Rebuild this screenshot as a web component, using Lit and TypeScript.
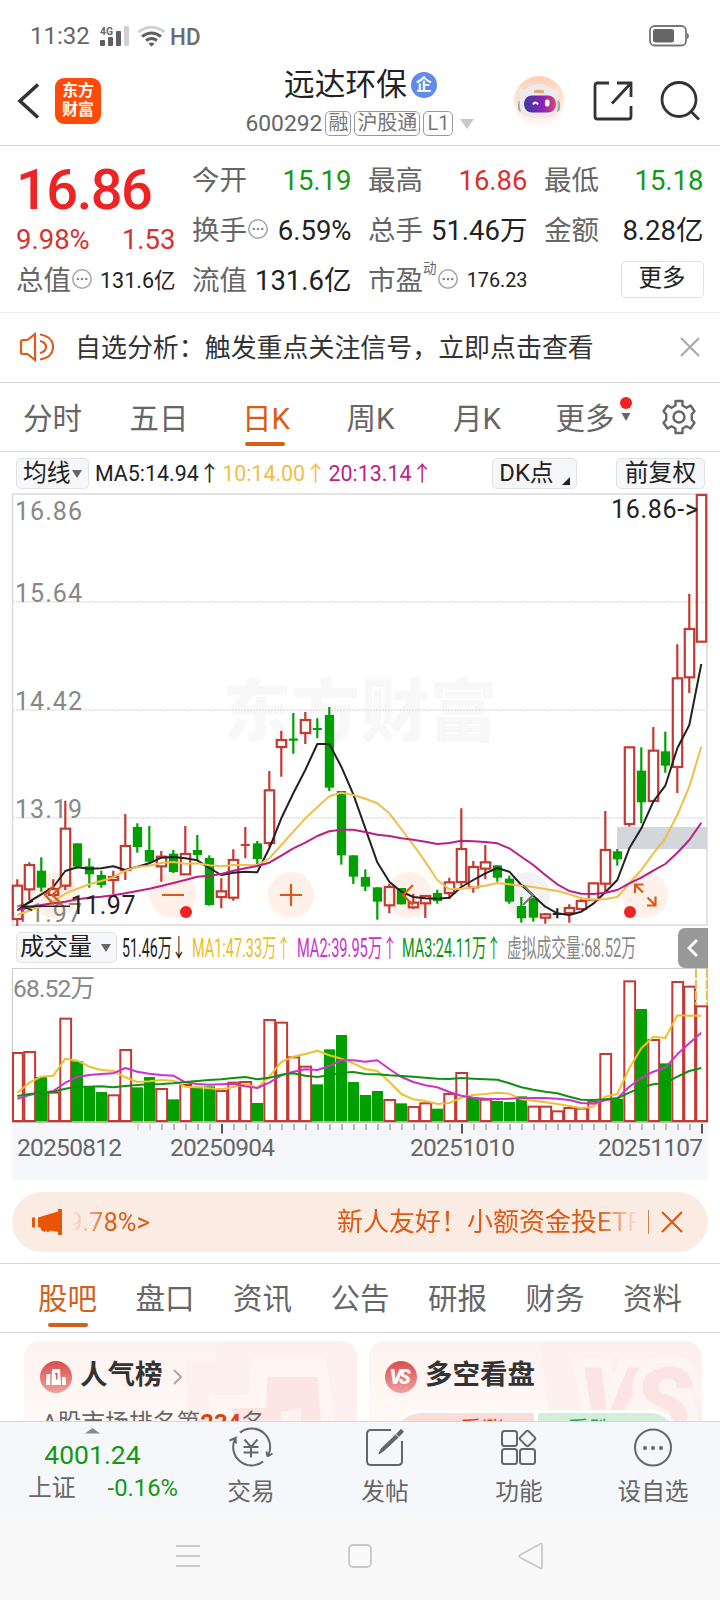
import { LitElement, html, svg, css } from "lit";
import { customElement } from "lit/decorators.js";

type Candle = [kind: "r" | "g" | "k", high: number, top: number, bottom: number, low: number];

/* Values are in thirds of a pixel below y = 485. */
const CANDLES: Candle[] = [
  ["r", 1183, 1202, 1302, 1323], ["r", 1132, 1140, 1213, 1245], ["g", 1117, 1157, 1208, 1220],
  ["r", 1183, 1212, 1230, 1235], ["r", 947, 1031, 1202, 1215], ["g", 1075, 1075, 1145, 1150],
  ["g", 1120, 1144, 1168, 1208], ["g", 1157, 1170, 1200, 1208], ["r", 1157, 1176, 1185, 1228],
  ["r", 987, 1083, 1155, 1185], ["g", 1015, 1026, 1086, 1103], ["g", 1023, 1095, 1130, 1135],
  ["r", 1098, 1115, 1144, 1190], ["g", 1095, 1106, 1161, 1164], ["r", 1023, 1107, 1168, 1168],
  ["g", 1050, 1095, 1110, 1128], ["g", 1111, 1119, 1260, 1262], ["r", 1180, 1219, 1236, 1270],
  ["r", 1093, 1125, 1238, 1247], ["r", 1026, 1080, 1080, 1120], ["g", 1068, 1075, 1122, 1138],
  ["r", 858, 916, 1074, 1085], ["r", 737, 765, 786, 875], ["g", 684, 764, 764, 806],
  ["r", 681, 705, 744, 777], ["g", 700, 732, 732, 760], ["g", 666, 690, 908, 918],
  ["g", 918, 918, 1111, 1139], ["g", 1111, 1111, 1175, 1197], ["g", 1153, 1176, 1205, 1218],
  ["g", 1207, 1207, 1250, 1304], ["r", 1196, 1206, 1261, 1285], ["g", 1209, 1209, 1258, 1258],
  ["r", 1226, 1253, 1267, 1272], ["r", 1231, 1233, 1255, 1299], ["g", 1214, 1224, 1248, 1256],
  ["r", 1178, 1192, 1224, 1242], ["r", 970, 1092, 1191, 1202], ["r", 1128, 1146, 1207, 1223],
  ["r", 1080, 1132, 1151, 1182], ["g", 1141, 1141, 1178, 1190], ["g", 1172, 1181, 1250, 1256],
  ["g", 1236, 1263, 1300, 1313], ["g", 1238, 1240, 1298, 1310], ["r", 1284, 1288, 1298, 1316],
  ["k", 1270, 1287, 1287, 1300], ["r", 1258, 1269, 1284, 1313], ["r", 1238, 1248, 1272, 1276],
  ["r", 1194, 1195, 1245, 1245], ["r", 978, 1095, 1196, 1226], ["g", 1092, 1099, 1123, 1142],
  ["r", 787, 787, 1017, 1025], ["g", 787, 857, 952, 1015], ["r", 726, 797, 948, 948],
  ["g", 740, 799, 842, 863], ["r", 478, 580, 846, 924], ["r", 326, 432, 577, 624],
  ["r", 30, 30, 470, 470],
];

const MA5 = [1276, 1250, 1228, 1206, 1158, 1147, 1151, 1150, 1144, 1155, 1145, 1135, 1118, 1116, 1120, 1126, 1149, 1170, 1163, 1160, 1162, 1090, 1000, 925, 855, 777, 777, 845, 928, 1030, 1132, 1190, 1220, 1236, 1240, 1241, 1238, 1206, 1185, 1165, 1149, 1160, 1200, 1232, 1265, 1285, 1290, 1280, 1256, 1222, 1185, 1090, 1030, 950, 902, 790, 720, 537];
const MA10 = [1290, 1277, 1264, 1250, 1226, 1211, 1198, 1188, 1177, 1157, 1145, 1142, 1134, 1131, 1136, 1135, 1141, 1144, 1140, 1140, 1141, 1120, 1080, 1040, 1000, 967, 934, 923, 930, 941, 955, 985, 1032, 1080, 1130, 1185, 1213, 1211, 1207, 1202, 1194, 1198, 1202, 1206, 1212, 1218, 1228, 1240, 1244, 1242, 1236, 1195, 1155, 1105, 1060, 990, 905, 785];
const MA20 = [1275, 1268, 1260, 1255, 1250, 1243, 1238, 1235, 1231, 1225, 1218, 1211, 1203, 1194, 1185, 1175, 1172, 1167, 1157, 1150, 1143, 1133, 1112, 1090, 1073, 1053, 1039, 1034, 1034, 1041, 1049, 1053, 1060, 1064, 1070, 1077, 1074, 1067, 1069, 1071, 1075, 1090, 1115, 1140, 1170, 1198, 1218, 1226, 1227, 1223, 1215, 1195, 1178, 1157, 1137, 1103, 1065, 1013];

/* Bar tops, in thirds of a pixel below y = 920. */
const VOLUMES = [399, 396, 471, 518, 296, 424, 499, 516, 526, 390, 502, 471, 507, 538, 495, 500, 499, 513, 488, 486, 549, 300, 308, 412, 440, 493, 388, 345, 486, 525, 513, 540, 550, 561, 550, 566, 522, 459, 533, 539, 543, 546, 529, 560, 560, 574, 564, 566, 545, 402, 536, 184, 267, 360, 430, 186, 200, 259];
const VOLUME_KINDS = "rrgrrgggrrggrgrggrrrgrrrrgggggg" + "rgrrgrrgrgggrrrrrrrgrgrgrrr";
const VMA1 = [518, 488, 470, 467, 416, 422, 440, 450, 453, 472, 486, 484, 480, 482, 500, 502, 505, 508, 501, 493, 503, 470, 426, 410, 402, 392, 406, 416, 430, 447, 453, 485, 522, 538, 543, 552, 549, 533, 525, 522, 518, 521, 538, 542, 547, 552, 558, 565, 560, 530, 522, 445, 385, 350, 354, 286, 287, 287];
const VMA2 = [536, 525, 518, 513, 488, 471, 465, 462, 460, 444, 455, 461, 465, 467, 487, 492, 494, 493, 491, 499, 504, 488, 466, 455, 448, 450, 438, 421, 421, 425, 421, 447, 471, 486, 496, 502, 516, 527, 533, 536, 537, 536, 534, 534, 534, 536, 540, 549, 551, 541, 535, 500, 474, 455, 443, 403, 370, 338];
const VMA3 = [528, 522, 518, 515, 506, 500, 500, 499, 502, 498, 495, 493, 492, 490, 486, 483, 480, 478, 474, 471, 478, 473, 464, 460, 467, 471, 466, 458, 456, 462, 463, 466, 468, 470, 473, 476, 477, 474, 476, 478, 479, 490, 502, 509, 515, 520, 530, 539, 540, 538, 535, 518, 502, 493, 489, 470, 453, 444];

const RED = "#c33a35";
const GREEN = "#00a000";
const cx = (i: number) => 17.3 + 12 * i;
const py = (v: number) => 485 + v / 3;
const vy = (v: number) => 920 + v / 3;
const line = (values: number[], y: (v: number) => number) =>
  values.map((v, i) => `${cx(i).toFixed(1)},${y(v).toFixed(1)}`).join(" ");

const base = css`
  * { box-sizing: border-box; }
  :host {
    display: block;
    font-family: Roboto, "Noto Sans CJK SC", sans-serif;
    color: #222;
    white-space: nowrap;
  }
  svg { display: block; flex: none; font-family: Roboto, "Noto Sans CJK SC", sans-serif; }
`;

@customElement("status-bar")
class StatusBar extends LitElement {
  static styles = [base, css`
    .bar { display: flex; align-items: center; height: 62px; padding: 9px 30px 0 30px; color: #666; }
    .time { font-size: 24px; width: 70px; line-height: 30px; padding-top: 1px; }
    .hd { flex: 1; padding-left: 6px; }
  `];
  render() {
    return html`<div class="bar">
      <span class="time">11:32</span>
      <svg width="65" height="24" viewBox="101 24 65 24">
        <text x="101" y="34.5" font-size="10.5" font-weight="700" fill="#666" textLength="13" lengthAdjust="spacingAndGlyphs">4G</text>
        <g fill="#606060"><rect x="101" y="40" width="5" height="6" rx="1"/><rect x="109" y="37" width="5" height="9" rx="1"/><rect x="117" y="31" width="5" height="15" rx="1"/></g>
        <rect x="125" y="26" width="5" height="20" rx="1" fill="#d0d0d0"/>
        <g fill="none" stroke-width="3"><path d="M139.5 32 Q152.5 22.500 165.500 32" stroke="#d2d2d2"/><path d="M143 36.500Q152.500 29.500 162 36.500" stroke="#606060"/><path d="M147 40.500Q152.500 36.500 158 40.500" stroke="#606060"/></g>
        <path d="M149.500 43.500Q152.500 41.500 155.500 43.500L152.500 46.800Z" fill="#606060"/>
      </svg>
      <div class="hd"><svg width="32" height="24" viewBox="0 0 32 24"><text x="-1" y="21" font-size="24" font-weight="500" fill="#6c6c6c" textLength="30.500" lengthAdjust="spacingAndGlyphs">HD</text></svg></div>
      <svg width="41" height="22" viewBox="0 0 41 22"><rect x="1" y="1" width="36" height="19.500" rx="4.500" fill="none" stroke="#777" stroke-width="1.800"/><rect x="4" y="4" width="21" height="13.500" rx="2.500" fill="#666"/><path d="M38 8q2 .5 2 3t-2 3z" fill="#777"/></svg>
    </div>`;
  }
}

@customElement("title-bar")
class TitleBar extends LitElement {
  static styles = [base, css`
    .bar { display: grid; grid-template-columns: 240px 240px 240px; height: 84px; border-bottom: 1px solid #d8d8d8; }
    .left { display: flex; align-items: center; gap: 15px; padding: 0 0 6px 17px; }
    .logo { width: 46px; height: 46px; border-radius: 9px; background: #ff4b05; color: #fff; font-size: 16px; line-height: 19px; font-weight: 700; text-align: center; padding-top: 3px; }
    .name { display: flex; align-items: center; justify-content: center; gap: 4px; height: 46px; font-size: 30.7px; line-height: 46px; padding-left: 1px; }
    .badge { width: 26px; height: 26px; margin-top: -1px; border-radius: 50%; background: #608be9; color: #fff; font-size: 16px; line-height: 25px; text-align: center; font-weight: 700; }
    .code { display: flex; align-items: center; gap: 3px; padding-left: 5.500px; height: 30px; color: #666; font-size: 22.800px; }
    .tag { height: 25px; border: 1.500px solid #999; border-radius: 5px; font-size: 20px; line-height: 22px; padding: 0 2px; color: #777; }
    .tag:nth-child(4) { padding: 0 3px; }
    .right { display: flex; align-items: center; padding: 0 19px 6px 33px; justify-content: space-between; }
  `];
  render() {
    return html`<div class="bar">
      <div class="left">
        <svg width="23" height="36" viewBox="0 0 23 36"><path d="M21 1.500 3 18l18 16.500" fill="none" stroke="#333" stroke-width="3.600"/></svg>
        <div class="logo">东方<br>财富</div>
      </div>
      <div>
        <div class="name"><span>远达环保</span><span class="badge">企</span></div>
        <div class="code"><span>600292</span><span class="tag">融</span><span class="tag">沪股通</span><span class="tag">L1</span>
          <svg width="22" height="11" viewBox="0 0 22 11"><path d="M4 1h14l-7 10z" fill="#c8c8c8"/></svg></div>
      </div>
      <div class="right">
        <svg width="52" height="52" viewBox="0 0 52 52">
          <defs><linearGradient id="a" x2="0" y2="1"><stop stop-color="#ffcfb4"/><stop offset="1" stop-color="#fffaf7"/></linearGradient><linearGradient id="b"><stop stop-color="#3d3b9c"/><stop offset=".6" stop-color="#8a24b8"/><stop offset="1" stop-color="#e2456e"/></linearGradient></defs>
          <circle cx="26" cy="26" r="25" fill="url(#a)"/>
          <rect x="5" y="25" width="9" height="12" rx="4" fill="#a9a6ad"/><rect x="38" y="25" width="9" height="12" rx="4" fill="#a9a6ad"/>
          <path d="M7 11q1 5 6 3Q19 9 26 9t13 5q5 2 6-3 2 7-1 11 3 20-7 20-11 3-22 0-10-1-8-20Q4 18 7 11Z" fill="#eceaed"/>
          <path d="M21 15.500q5-1.500 10 0v2.500h-10z" fill="#e9a873"/>
          <rect x="11" y="20.500" width="32" height="17" rx="8" fill="url(#b)"/>
          <path d="M20 29.500q2.500-4 5 0" fill="none" stroke="#fff" stroke-width="2"/><rect x="32" y="24.500" width="4.500" height="7" rx="2" fill="#fff"/>
        </svg>
        <svg width="40" height="40" viewBox="0 0 40 40" fill="none" stroke="#333" stroke-width="2.800"><path d="M16 2H4.500Q2 2 2 4.500v31Q2 38 4.500 38h31q2.500 0 2.500-2.500V25"/><path d="M24 2h14v14M38 2 19 22.500"/></svg>
        <svg width="41" height="41" viewBox="0 0 41 41" fill="none" stroke="#333" stroke-width="2.800"><circle cx="19" cy="19.500" r="17"/><path d="m31 31.500 8 8"/></svg>
      </div>
    </div>`;
  }
}

const info = html`<svg width="20" height="20" viewBox="0 0 20 20"><circle cx="10" cy="10" r="9.200" fill="none" stroke="#a4a4a4" stroke-width="1.500"/><g fill="#888"><circle cx="5.800" cy="10" r="1.300"/><circle cx="10" cy="10" r="1.300"/><circle cx="14.200" cy="10" r="1.300"/></g></svg>`;

@customElement("quote-panel")
class QuotePanel extends LitElement {
  static styles = [base, css`
    .panel { display: grid; grid-template-columns: 159.500px 159.500px 159.500px 159.500px; column-gap: 16.500px; padding: 9.500px 0 6.500px 16px; height: 167px; border-bottom: 1px solid #ececec; grid-template-rows: 50px 50px 50px; }
    .cell { display: flex; align-items: center; justify-content: space-between; font-size: 27.500px; line-height: 40px; }
    .label { display: flex; align-items: center; color: #666; }
    .label svg { margin: -4px 0 0 1px; }
    .label sup { font-size: 13.500px; line-height: 14px; align-self: flex-start; }
    .lead { grid-row: span 2; display: grid; grid-template-rows: 66px 35px; }
    .price { font-size: 56px; font-weight: 500; line-height: 68px; color: #ee2424; letter-spacing: -1.500px; padding-left: 0; }
    .change { display: flex; justify-content: space-between; color: #d93030; font-size: 27.500px; line-height: 36px; }
    .red { color: #d93030; }
    .green { color: #149814; }
    .s22 { font-size: 21.500px; }
    .s20 { font-size: 19.800px; }
    .more { justify-self: end; align-self: center; width: 83px; height: 37px; border: 1.500px solid #e2e2e2; border-radius: 5px; text-align: center; font-size: 23.500px; line-height: 33px; margin-top: -3px; }
  `];
  render() {
    return html`<div class="panel">
      <div class="lead"><div class="price">16.86</div><div class="change"><span>9.98%</span><span>1.53</span></div></div>
      <div class="cell"><span class="label">今开</span><span class="green">15.19</span></div>
      <div class="cell"><span class="label">最高</span><span class="red">16.86</span></div>
      <div class="cell"><span class="label">最低</span><span class="green">15.18</span></div>
      <div class="cell"><span class="label">换手${info}</span><span>6.59%</span></div>
      <div class="cell"><span class="label">总手</span><span>51.46万</span></div>
      <div class="cell"><span class="label">金额</span><span>8.28亿</span></div>
      <div class="cell"><span class="label">总值${info}</span><span class="s22">131.6亿</span></div>
      <div class="cell"><span class="label">流值</span><span>131.6亿</span></div>
      <div class="cell"><span class="label">市盈<sup>动</sup>${info}</span><span class="s20">176.23</span></div>
      <div class="more">更多</div>
    </div>`;
  }
}

@customElement("notice-row")
class NoticeRow extends LitElement {
  static styles = [base, css`
    .row { display: flex; align-items: center; height: 70px; padding: 0 20px 2px 19px; border-bottom: 1px solid #d8d8d8; }
    .text { flex: 1; font-size: 25.950px; padding: 0 0 2px 21px; color: #333; }
  `];
  render() {
    return html`<div class="row">
      <svg width="35" height="30" viewBox="0 0 35 30" fill="none" stroke="#dd5a18" stroke-width="2.200"><path d="M16 2 8.500 8H4Q2 8 2 10v10q0 2 2 2h4.500L16 28z"/><path d="M21 2.500q13 2 13 12.500T21 27.500"/><path d="M21 9q6 1.500 6 6t-6 6"/></svg>
      <div class="text">自选分析：触发重点关注信号，立即点击查看</div>
      <svg width="20" height="20" viewBox="0 0 20 20"><path d="m1 1 18 18M19 1 1 19" stroke="#aaa" stroke-width="2.200"/></svg>
    </div>`;
  }
}

@customElement("period-tabs")
class PeriodTabs extends LitElement {
  static styles = [base, css`
    .row { display: flex; height: 69px; border-bottom: 1px solid #d8d8d8; padding: 0 23px; font-size: 29.500px; line-height: 72px; color: #666; }
    .tab { width: 106.500px; flex: none; }
    .on { color: #dc5c14; display: flex; flex-direction: column; padding-left: 6px; }
    .on::after { content: ""; width: 40px; height: 4.500px; border-radius: 2px; background: #dc5c14; margin: -13.500px 0 0 3px; }
    .k { padding-left: 4px; }
    .more { display: flex; width: 125.500px; padding-left: 0; gap: 4px; margin-left: 0; }
    .more svg { margin-left: 1px; }
    .gear { padding-top: 16px; }
  `];
  render() {
    return html`<div class="row">
      <span class="tab">分时</span><span class="tab">五日</span><span class="tab on">日K</span>
      <span class="tab k">周K</span><span class="tab k">月K</span>
      <span class="more">更多<svg width="14" height="40" viewBox="0 0 14 40"><circle cx="6" cy="20" r="6" fill="#ee2222"/><path d="M1.500 30h9L6 38z" fill="#666"/></svg></span>
      <svg class="gear" width="36" height="52" viewBox="0 0 36 36" fill="none" stroke="#666" stroke-width="2.400"><circle cx="18" cy="18" r="5.500"/><path d="M14.500 2h7v4.500l4 2.300 4-2.300 4 5.800-2.700 3v5.400l2.700 3-4 5.800-4-2.300-4 2.300V34h-7v-4.500l-4-2.300-4 2.300-4-5.800 2.700-3v-5.400l-2.700-3 4-5.800 4 2.300 4-2.300z" stroke-linejoin="round"/></svg>
    </div>`;
  }
}

@customElement("indicator-row")
class IndicatorRow extends LitElement {
  static styles = [base, css`
    .row { display: flex; align-items: center; height: 40px; padding: 3px 15px 0 16px; font-size: 21.400px; line-height: 30px; }
    .btn { display: flex; align-items: center; justify-content: center; height: 31px; background: #f6f7fa; border: 1.500px solid #e0e2e6; border-radius: 5px; font-size: 23.800px; line-height: 27px; }
    .avg { width: 72.500px; gap: 1px; margin-right: 6.500px; }
    .ma { margin-right: 2px; }
    .y { color: #f2bd48; }
    .m { color: #bb1f83; }
    .dk { width: 85px; margin-left: auto; gap: 8px; align-items: center; }
    .dk svg { align-self: flex-end; margin-bottom: 3px; }
    .adj { width: 89px; margin-left: 39px; }
  `];
  render() {
    return html`<div class="row">
      <span class="btn avg">均线<svg width="10" height="10" viewBox="0 0 10 10"><path d="M0 1h10L5 9z" fill="#666"/></svg></span>
      <span class="ma">MA5:14.94↑</span><span class="ma y">10:14.00↑</span><span class="ma m">20:13.14↑</span>
      <span class="btn dk">DK点<svg width="8" height="8" viewBox="0 0 8 8"><path d="M8 0v8H0z" fill="#222"/></svg></span>
      <span class="btn adj">前复权</span>
    </div>`;
  }
}

@customElement("price-chart")
class PriceChart extends LitElement {
  static styles = [base];
  candle([kind, hi, top, bot, lo]: Candle, i: number) {
    const x = cx(i);
    const c = kind === "r" ? RED : kind === "g" ? GREEN : "#222";
    if (top === bot)
      return svg`<path d=${`M${x} ${py(hi)}V${py(lo)}M${x - 4.5} ${py(top)}h9`} stroke=${c} stroke-width="2.200"/>`;
    if (kind === "g")
      return svg`<path d=${`M${x} ${py(hi)}V${py(lo)}`} stroke=${c} stroke-width="2.200"/><rect x=${x - 4.5} y=${py(top)} width="9.300" height=${(bot - top) / 3} fill=${c}/>`;
    return svg`<path d=${`M${x} ${py(hi)}V${py(top)}M${x} ${py(bot)}V${py(lo)}`} stroke=${c} stroke-width="2.200"/><rect x=${x - 4.5} y=${py(top)} width="9.400" height=${(bot - top) / 3} fill="none" stroke=${c} stroke-width="2.200"/>`;
  }
  render() {
    const scale: [string, number][] = [["16.86", 519.7], ["15.64", 601.7], ["14.42", 709.7], ["13.19", 817.7], ["11.97", 921.7]];
    return html`<svg width="720" height="436" viewBox="0 492 720 436">
      <text x="223" y="736" font-size="68" font-weight="900" fill="#f8f8f8" textLength="274">东方财富</text>
      <rect x="12.500" y="494" width="694.500" height="431" fill="none" stroke="#dedede" stroke-width="1.700"/>
      ${[602, 710, 818].map((y) => svg`<path d=${`M13 ${y}H707`} stroke="#e0e0e0" stroke-width="1.500" stroke-dasharray="2 1"/>`)}
      <rect x="617" y="827" width="90" height="22" fill="#d3d6da"/>
      ${[55, 173, 291, 409, 645].map((x) => svg`<circle cx=${x} cy="895" r="23" fill="#fff0e9"/>`)}
      <circle cx="527" cy="895" r="23" fill="#f2f2f2"/>
      ${scale.map(([t, y]) => svg`<text x="15" y=${y} font-size="25" fill="#888" textLength="67">${t}</text>`)}
      ${CANDLES.map((c, i) => this.candle(c, i))}
      <g fill="none" stroke-width="2" stroke-linejoin="round">
        <polyline points=${line(MA5, py)} stroke="#222"/>
        <polyline points=${line(MA10, py)} stroke="#f2bd48"/>
        <polyline points=${line(MA20, py)} stroke="#bb1f83"/>
      </g>
      <path d="M70 906.300H22M33 901l-11 5.300 10 4" fill="none" stroke="#222" stroke-width="1.500"/>
      <text x="70.500" y="913.700" font-size="25" fill="#222" textLength="65">11.97</text>
      <text x="611" y="518" font-size="25" fill="#222" textLength="87">16.86-&gt;</text>
      <g fill="none" stroke="#dd5a14" stroke-width="2.200">
        <path d="M54 885.500 45 895l9 9.500M62 885.500 52.500 895l9.500 9.500M162 895h22M280 895h22M291 884v22M413 885l-10 10 10 10"/>
        <path d="M635 893v-8.500h8.500M635 884.500l8 8M655.500 896.500v9H647M655.500 905.500l-8-8"/>
      </g>
      <path d="m523 885 10 10-10 10" fill="none" stroke="#777" stroke-width="2"/>
      <circle cx="186" cy="912" r="6" fill="#ee2222"/><circle cx="630" cy="912" r="6" fill="#ee2222"/>
    </svg>`;
  }
}

@customElement("volume-chart")
class VolumeChart extends LitElement {
  static styles = [base, css`
    .head { display: flex; align-items: center; height: 39px; padding: 0 12px 0 16px; }
    .btn { display: flex; align-items: center; justify-content: center; gap: 9px; width: 101px; height: 31px; background: #f6f7fa; border: 1.500px solid #e0e2e6; border-radius: 5px; font-size: 24px; line-height: 27px; padding-right: 2px; }
    .fold { width: 30px; height: 40px; background: #999; border-radius: 7px 0 0 7px; display: grid; place-items: center; }
    .legend { flex: 1; }
  `];
  render() {
    const legend: [string, number, number, string][] = [
      ["51.46万↓", 122, 64, "#222"], ["MA1:47.33万↑", 192, 99, "#eac028"], ["MA2:39.95万↑", 297, 100, "#cc33cc"],
      ["MA3:24.11万↑", 402, 99, "#109410"], ["虚拟成交量:68.52万", 507, 129, "#888"],
    ];
    const dates: [string, number][] = [["20250812", 17], ["20250904", 170], ["20251010", 410], ["20251107", 598]];
    return html`
      <div class="head">
        <span class="btn">成交量<svg width="10" height="10" viewBox="0 0 10 10"><path d="M0 1h10L5 9z" fill="#666"/></svg></span>
        <svg class="legend" width="561" height="34" viewBox="117 930 561 34">
          ${legend.map(([t, x, w, c]) => svg`<text x=${x} y="956" font-size="25" fill=${c} textLength=${w} lengthAdjust="spacingAndGlyphs">${t}</text>`)}
        </svg>
        <span class="fold"><svg width="12" height="18" viewBox="0 0 12 18"><path d="m10 1-8 8 8 8" fill="none" stroke="#fff" stroke-width="2.800"/></svg></span>
      </div>
      <svg width="720" height="213" viewBox="0 967 720 213">
        <rect x="12" y="1122.500" width="696" height="58" fill="#f6f7fa"/>
        <path d="M12.500 1122V968.500H707.500V1122" fill="none" stroke="#ccc" stroke-width="1.200"/>
        <path d="M12 1122.500H708" stroke="#c9b9b4" stroke-width="1"/>
        <text x="13" y="997" font-size="24.500" fill="#888" textLength="82">68.52万</text>
        ${VOLUMES.map((v, i) => {
          const x = cx(i);
          const y = vy(v);
          return VOLUME_KINDS[i] === "g"
            ? svg`<rect x=${x - 5.300} y=${y} width="11" height=${1121.5 - y} fill=${GREEN}/>`
            : svg`<rect x=${Math.max(13, x - 5)} y=${y} width=${i ? 10.800 : 9.800} height=${1121 - y} fill="#fff" stroke=${RED} stroke-width="2"/>`;
        })}
        <path d="M696 969v36M706.800 969v36" stroke="#e6c04a" stroke-width="2" stroke-dasharray="9 2"/>
        <g fill="none" stroke-width="2" stroke-linejoin="round">
          <polyline points=${line(VMA1, vy)} stroke="#ecc22c"/>
          <polyline points=${line(VMA2, vy)} stroke="#cc33cc"/>
          <polyline points=${line(VMA3, vy)} stroke="#109010"/>
        </g>
        ${Array.from({ length: 48 }, (_, i) => {
          const x = 138 + 12 * i;
          const major = x === 222 || x === 462 || x === 702;
          return svg`<path d=${`M${x} 1124v${major ? 9.500 : 6}`} stroke=${major ? "#555" : i < 2 ? "#ccc" : "#a8a8a8"} stroke-width=${major ? 2 : 1.600}/>`;
        })}
        ${dates.map(([t, x]) => svg`<text x=${x} y="1156" font-size="24.500" fill="#666" textLength="105">${t}</text>`)}
      </svg>`;
  }
}

@customElement("promo-banner")
class PromoBanner extends LitElement {
  static styles = [base, css`
    .banner { display: flex; align-items: center; height: 60px; margin: 12px 12px 11px; padding: 0 25px 0 20px; border-radius: 30px; background: #fbece3; color: #dd5a14; font-size: 26px; line-height: 40px; }
    .marquee { display: flex; width: 568px; margin-left: 8px; overflow: hidden; -webkit-mask-image: linear-gradient(90deg, transparent, #000 7%, #000 93%, transparent 100%); mask-image: linear-gradient(90deg, transparent, #000 7%, #000 93%, transparent 100%); }
    .tail { flex: none; width: 269px; margin-left: -3px; font-size: 25.500px; }
    .sep { width: 1.500px; height: 24px; background: #c98350; margin: 0 12px 0 10px; }
  `];
  render() {
    return html`<div class="banner">
      <svg width="31" height="27" viewBox="0 0 31 27" fill="#e85504"><path d="M0 8.500h3v10H0zM6 8.500 26 2.500V0h4v26h-4v-3l-8-1.500-2 2-2.500-2-1 1.500-3-1.500-1-3L6 18z"/></svg>
      <div class="marquee"><span class="tail">9.78%&gt;</span><span>新人友好！小额资金投ETF</span></div>
      <span class="sep"></span>
      <svg width="22" height="22" viewBox="0 0 22 22"><path d="m1 1 20 20M21 1 1 21" stroke="#dd5a14" stroke-width="2.200"/></svg>
    </div>`;
  }
}

@customElement("section-tabs")
class SectionTabs extends LitElement {
  static styles = [base, css`
    .row { display: flex; justify-content: space-between; height: 70px; padding: 0 38px; border-top: 1px solid #d6d6d6; border-bottom: 1px solid #d6d6d6; font-size: 29.500px; line-height: 71px; color: #666; }
    .on { color: #d25f1c; display: flex; flex-direction: column; align-items: center; }
    .on::after { content: ""; width: 40px; height: 4.500px; border-radius: 2px; background: #d25f1c; margin-top: -12.500px; }
  `];
  render() {
    return html`<div class="row">${["股吧", "盘口", "资讯", "公告", "研报", "财务", "资料"].map((t, i) => html`<span class=${i ? "" : "on"}>${t}</span>`)}</div>`;
  }
}

@customElement("info-cards")
class InfoCards extends LitElement {
  static styles = [base, css`
    .cards { display: grid; grid-template-columns: 333px 333px; gap: 12px; padding: 8px 24px 0; height: 88px; overflow: hidden; }
    .card { display: grid; grid-template-areas: "s"; align-content: start; height: 160px; border-radius: 16px; overflow: hidden; background: linear-gradient(#fdf2f0, #fff8f5 40%); }
    .card > * { grid-area: s; }
    .title { display: flex; align-items: center; height: 40px; margin-top: 16px; padding-left: 16px; font-size: 27.500px; line-height: 36px; font-weight: 700; color: #333; }
    .title .t { padding: 0 10px 4px 8px; }
    .rank { padding: 66px 0 0 18px; font-size: 23.800px; line-height: 32px; color: #666; }
    .rank b { color: #d9420f; }
    .vote { display: grid; grid-template-columns: 1fr 1fr; gap: 4px; align-self: start; margin: 69px 22px 0; height: 60px; border: 3px solid #fff; border-radius: 30px; overflow: hidden; background: #fff; font-size: 22px; line-height: 34px; text-align: center; }
    .up { background: #fbdcd8; color: #d9420f; padding-left: 36px; }
    .down { background: #d3eedb; color: #2ba24c; padding-right: 36px; }
  `];
  render() {
    return html`<div class="cards">
      <div class="card">
        <svg width="333" height="100" viewBox="24 1341 333 100"><path d="M218 1341H357V1441H187V1361h29z" fill="#fdf0ee"/><path d="M252 1357h73q8 40 10 84H209v-46h39z" fill="#fff6f4"/><path d="M267 1377h51l4 64H233v-33h33z" fill="#fbe6e4"/><path d="m281 1412 20-4v34h-20z" fill="#fef3f1"/></svg>
        <div class="title">
          <svg width="32" height="32" viewBox="0 0 32 32"><defs><linearGradient id="c" x2="0" y2="1"><stop stop-color="#d84e4e"/><stop offset="1" stop-color="#f0a09c"/></linearGradient></defs><circle cx="16" cy="16" r="16" fill="url(#c)"/><path d="M6.500 13h4l-.5 11H6zM12 8h8l1 16h-9.500zM22 16h3.500l.5 8h-4z" fill="#fff"/><path d="M15 13 16.800 12.500v6" fill="none" stroke="#d86060" stroke-width="1.500"/></svg>
          <span class="t">人气榜</span>
          <svg width="10" height="16" viewBox="0 0 10 16"><path d="m1 1 7 7-7 7" fill="none" stroke="#aaa" stroke-width="2"/></svg>
        </div>
        <div class="rank">A股市场排名第<b>234</b>名</div>
      </div>
      <div class="card">
        <svg width="333" height="100" viewBox="369 1341 333 100"><path d="M540 1341H702V1441H552z" fill="#fdf0ee"/><text x="578" y="1436" font-size="96" font-weight="900" font-style="italic" fill="#fbe4e2" stroke="#fef5f3" stroke-width="20" paint-order="stroke" textLength="114">VS</text></svg>
        <div class="title">
          <svg width="32" height="32" viewBox="0 0 32 32"><defs><linearGradient id="d" x2="0" y2="1"><stop stop-color="#d84e4e"/><stop offset="1" stop-color="#f0a09c"/></linearGradient></defs><circle cx="16" cy="16" r="16" fill="url(#d)"/><text x="4.500" y="23" font-size="19.500" font-weight="900" font-style="italic" fill="#fff" textLength="21">VS</text></svg>
          <span class="t">多空看盘</span>
        </div>
        <div class="vote"><span class="up">看涨</span><span class="down">看跌</span></div>
      </div>
    </div>`;
  }
}

@customElement("action-bar")
class ActionBar extends LitElement {
  static styles = [base, css`
    .bar { display: flex; height: 91px; border-top: 1px solid #d5d8dd; background: #f5f7fa; color: #666; }
    .index { width: 184px; display: flex; flex-direction: column; align-items: center; padding-top: 6px; color: #149814; }
    .val { font-size: 26.500px; line-height: 41px; padding-left: 1px; }
    .sub { display: flex; justify-content: space-between; width: 150px; font-size: 23.800px; line-height: 26px; margin-left: 22px; }
    .sub .n { color: #666; }
    .item { width: 134px; display: flex; flex-direction: column; align-items: center; padding-top: 6px; font-size: 23.700px; line-height: 49px; }
    .item svg { overflow: visible; }
    .nav { display: flex; justify-content: space-between; align-items: center; height: 88px; padding: 0 176px; background: #f9f9f9; }
  `];
  render() {
    const icon = (body: unknown) => html`<svg width="44" height="40" viewBox="0 0 44 40" fill="none" stroke="#666" stroke-width="2">${body}</svg>`;
    return html`<div class="bar">
        <div class="index">
          <svg width="15" height="6" viewBox="0 0 15 6"><path d="M0 5.500 7.500 0 15 5.500z" fill="#888"/></svg>
          <span class="val">4001.24</span>
          <span class="sub"><span class="n">上证</span><span>-0.16%</span></span>
        </div>
        <div class="item">${icon(svg`<path d="M11 4.600A18.500 18.500 0 0 1 38.500 28.500L43.500 25.500M38.500 28.500 37.500 23.500M34 33.600A18.500 18.500 0 0 1 6.500 10L.5 12.500M6.500 10 7 15.500M15.500 11.500l6.500 7.500 6.500-7.500M22 19v10.500M14.500 19h15M14.500 24.500h15"/>`)}交易</div>
        <div class="item">${icon(svg`<path d="M28 2H8Q4 2 4 6v27q0 4 4 4h27q4 0 4-4V13"/><path d="m34 6 4-4.200 2 2L36 8zM32.500 7.500 34.500 9.500 20 23l-4 2.500 2.500-4.500z" fill="#666" stroke-width="1.500"/>`)}发帖</div>
        <div class="item">${icon(svg`<rect x="5" y="3" width="15" height="15" rx="2.500"/><rect x="5" y="21" width="15" height="15" rx="2.500"/><rect x="23" y="21" width="15" height="15" rx="2.500"/><rect x="24.500" y="4.500" width="12" height="12" rx="2" transform="rotate(45 30.500 10.500)"/>`)}功能</div>
        <div class="item">${icon(svg`<circle cx="22" cy="19.500" r="18"/><g fill="#666" stroke="none"><circle cx="14" cy="20" r="2"/><circle cx="22" cy="20" r="2"/><circle cx="30" cy="20" r="2"/></g>`)}设自选</div>
      </div>
      <div class="nav">
        <svg width="24" height="24" viewBox="0 0 24 24"><path d="M0 2h24M0 12h24M0 22h24" stroke="#ccc" stroke-width="1.800"/></svg>
        <svg width="26" height="24" viewBox="-2 0 26 24"><rect x="1" y="1" width="22" height="22" rx="4" fill="none" stroke="#c8c8c8" stroke-width="1.800"/></svg>
        <svg width="26" height="28" viewBox="0 0 26 28"><path d="M24 3v22q0 2-2 1L2 15.500q-1.500-1.200 0-2.500L22 2q2-1 2 1z" fill="none" stroke="#c8c8c8" stroke-width="1.800"/></svg>
      </div>`;
  }
}

@customElement("app-root")
class AppRoot extends LitElement {
  static styles = css`
    :host { display: block; width: 720px; height: 1600px; overflow: hidden; background: #fff; }
  `;
  render() {
    return html`
      <status-bar></status-bar>
      <title-bar></title-bar>
      <quote-panel></quote-panel>
      <notice-row></notice-row>
      <period-tabs></period-tabs>
      <indicator-row></indicator-row>
      <price-chart></price-chart>
      <volume-chart></volume-chart>
      <promo-banner></promo-banner>
      <section-tabs></section-tabs>
      <info-cards></info-cards>
      <action-bar></action-bar>
    `;
  }
}
